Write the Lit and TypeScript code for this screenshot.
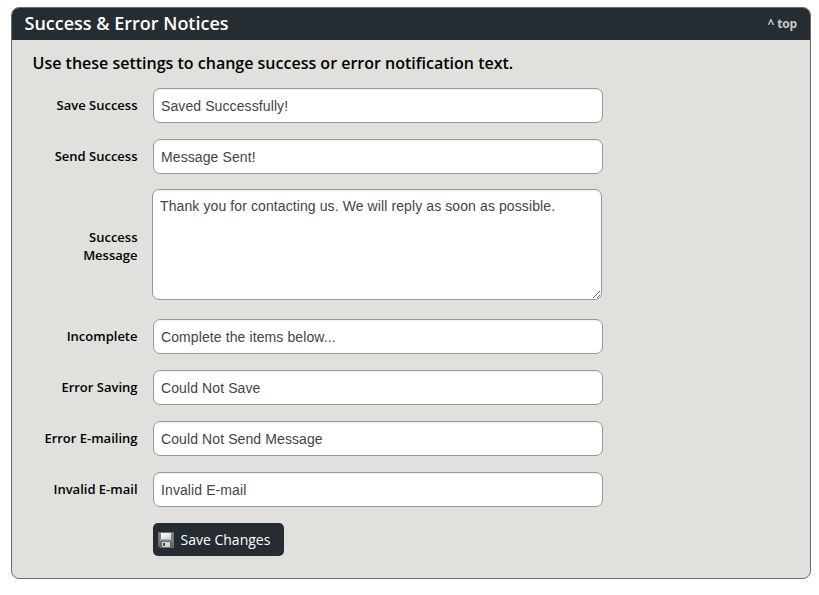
import { LitElement, html, css, svg } from "lit";
import { customElement } from "lit/decorators.js";

interface Field {
  id: string;
  label: string;
  value: string;
  multiline?: boolean;
}

const FIELDS: Field[] = [
  { id: "save-success", label: "Save Success", value: "Saved Successfully!" },
  { id: "send-success", label: "Send Success", value: "Message Sent!" },
  {
    id: "success-message",
    label: "Success Message",
    value: "Thank you for contacting us. We will reply as soon as possible.",
    multiline: true,
  },
  { id: "incomplete", label: "Incomplete", value: "Complete the items below..." },
  { id: "error-saving", label: "Error Saving", value: "Could Not Save" },
  { id: "error-emailing", label: "Error E-mailing", value: "Could Not Send Message" },
  { id: "invalid-email", label: "Invalid E-mail", value: "Invalid E-mail" },
];

const diskIcon = svg`
  <defs>
    <linearGradient id="body" x1="0" y1="0" x2="0" y2="1">
      <stop offset="0" stop-color="#8c8c8c" />
      <stop offset="1" stop-color="#5e5e5e" />
    </linearGradient>
    <linearGradient id="label" x1="0" y1="0" x2="1" y2="1">
      <stop offset="0" stop-color="#ffffff" />
      <stop offset="1" stop-color="#d0d0d0" />
    </linearGradient>
  </defs>
  <path d="M0.5 0.5H15.5V15.5H2L0.5 14Z" fill="url(#body)" stroke="#707070" />
  <rect x="3" y="1" width="10" height="6" fill="url(#label)" />
  <rect x="2" y="7" width="12" height="1" fill="#a8a8a8" />
  <rect x="1" y="8" width="14" height="1" fill="#8a8a8a" />
  <rect x="4" y="10" width="8" height="5" fill="#d4d4d4" />
  <rect x="5" y="11" width="2" height="3" fill="#4c4c4c" />
`;

@customElement("app-root")
export class AppRoot extends LitElement {
  static styles = css`
    :host {
      display: block;
      box-sizing: border-box;
      height: 595px;
      padding: 7px 8px 16px 11px;
      background: #fff;
      font-family: "Open Sans", sans-serif;
      color: #000;
    }
    .panel {
      box-sizing: border-box;
      height: 572px;
      border: 1px solid #6b6e70;
      border-radius: 8px;
      background: #e0e1dc;
      overflow: hidden;
    }
    .header {
      display: flex;
      align-items: flex-start;
      justify-content: space-between;
      height: 32px;
      padding: 0 13px 0 12.5px;
      background: #252c32;
    }
    .title {
      margin: 0;
      font-size: 18px;
      font-weight: 600;
      line-height: 30px;
      color: #fff;
    }
    .top {
      font-size: 12px;
      font-weight: 700;
      line-height: 32px;
      letter-spacing: -0.15px;
      color: #c8c8c8;
      text-decoration: none;
    }
    .intro {
      margin: 12px 0 14px 20.5px;
      font-size: 16px;
      font-weight: 600;
      line-height: 22px;
    }
    .fields {
      display: flex;
      flex-direction: column;
      gap: 16px;
      padding-left: 20px;
    }
    .row {
      display: flex;
      align-items: center;
      gap: 15px;
      height: 35px;
    }
    .row.tall {
      height: 114px;
      margin-top: -1px;
    }
    .label {
      box-sizing: border-box;
      width: 106px;
      padding: 0 0.5px 2px 0;
      font-size: 13px;
      font-weight: 600;
      line-height: 18px;
      text-align: right;
    }
    .tall .label {
      padding: 0 0.5px 0 46px;
    }
    .input {
      box-sizing: border-box;
      width: 450px;
      height: 35px;
      margin: 0;
      padding: 1px 7px 0;
      border: 1px solid #999;
      border-radius: 7px;
      outline: none;
      background: #fff;
      box-shadow: inset 0 1px 2px #eee;
      font: 14px/18px "Liberation Sans", Arial, sans-serif;
      letter-spacing: 0.1px;
      color: #444;
    }
    textarea.input {
      display: block;
      align-self: flex-start;
      height: 111px;
      margin-left: -1px;
      padding-top: 7px;
      resize: both;
    }
    .save {
      display: flex;
      align-items: center;
      gap: 6.5px;
      width: 131px;
      height: 33px;
      margin: 16px 0 0 141px;
      padding: 0 0 0 5px;
      border: 0;
      border-radius: 5px;
      background: #252c32;
      font: 14px/20px "Open Sans", sans-serif;
      color: #fff;
    }
    .disk {
      width: 16px;
      height: 16px;
    }
  `;

  private renderField(f: Field) {
    return html`
      <div class="row ${f.multiline ? "tall" : ""}">
        <label class="label" for=${f.id}>${f.label}</label>
        ${f.multiline
          ? html`<textarea class="input" id=${f.id} spellcheck="false" .value=${f.value}></textarea>`
          : html`<input class="input" id=${f.id} type="text" spellcheck="false" .value=${f.value} />`}
      </div>
    `;
  }

  render() {
    return html`
      <section class="panel">
        <header class="header">
          <h2 class="title">Success &amp; Error Notices</h2>
          <a class="top" href="#">^ top</a>
        </header>
        <p class="intro">Use these settings to change success or error notification text.</p>
        <div class="fields">${FIELDS.map((f) => this.renderField(f))}</div>
        <button class="save" type="button">
          <svg class="disk" viewBox="0 0 16 16" aria-hidden="true">${diskIcon}</svg>
          <span>Save Changes</span>
        </button>
      </section>
    `;
  }
}
